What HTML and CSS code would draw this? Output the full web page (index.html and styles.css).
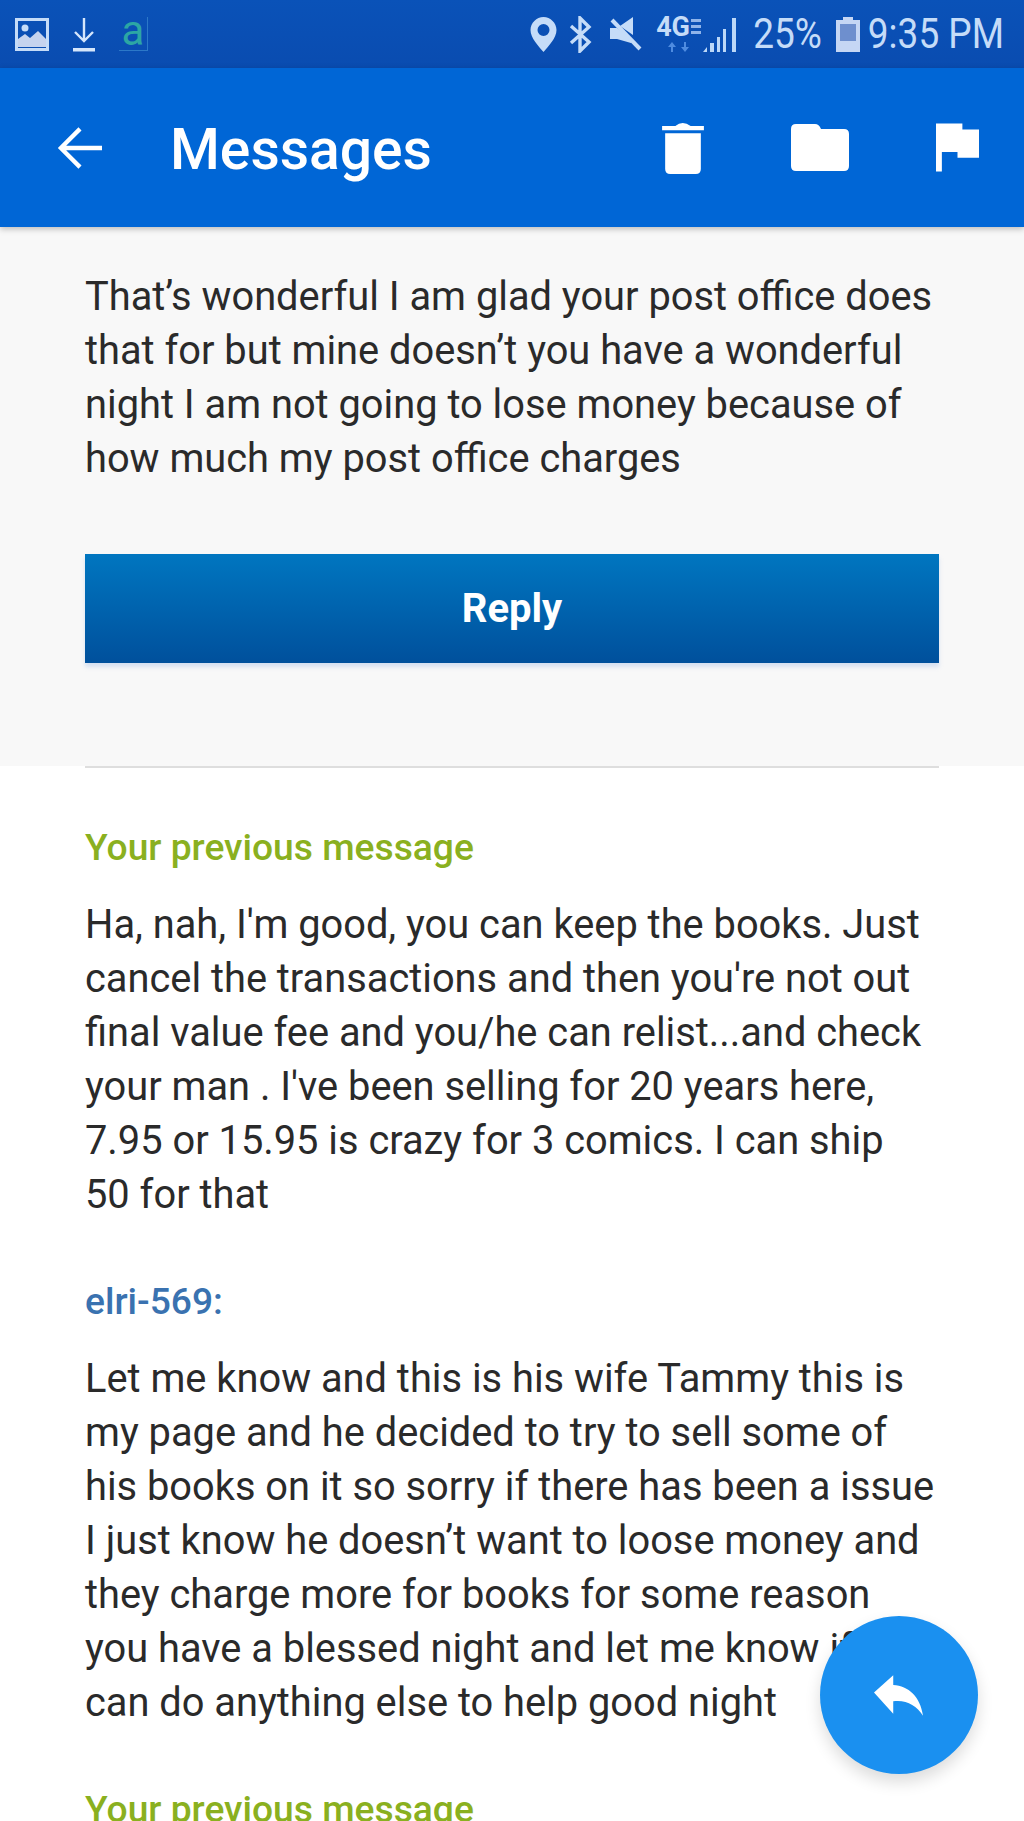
FILE: index.html
```html
<!DOCTYPE html>
<html lang="en">
<head>
  <meta charset="UTF-8">
  <meta name="viewport" content="width=device-width, initial-scale=1.0">
  <link rel="stylesheet" href="styles.css">
  <title>Messages</title>
</head>
<body>
  <div class="status-bar">
    <div class="status-left">
      <svg class="ic-image" width="34" height="33" viewBox="0 0 34 33">
        <rect x="1.5" y="1.5" width="31" height="30" fill="none" stroke="#c5dcf8" stroke-width="3"/>
        <circle cx="10" cy="10" r="3.5" fill="#c5dcf8"/>
        <path d="M3 29V21L10 16L15 20L23 13L31 21V29Z" fill="#c5d3ee"/>
      </svg>
      <svg class="ic-download" width="24" height="35" viewBox="0 0 24 35">
        <path d="M12 1V24M3 15L12 24L21 15" fill="none" stroke="#d5e6fb" stroke-width="2.4"/>
        <rect x="1" y="31" width="22" height="3.5" fill="#d5e6fb"/>
      </svg>
      <span class="amazon-a">a</span>
    </div>
    <div class="status-right">
      <svg class="ic-pin" width="27" height="35" viewBox="0 0 26 35">
        <path fill-rule="evenodd" d="M13 0C6 0 0 6 0 13C0 21 8 29 13 35C18 29 26 21 26 13C26 6 20 0 13 0ZM13 7A6 6 0 1 1 13 19A6 6 0 1 1 13 7Z" fill="#c5dcf8"/>
      </svg>
      <svg class="ic-bt" width="24" height="37" viewBox="0 0 24 37">
        <path d="M3 10L21 26L12 35V2L21 11L3 27" fill="none" stroke="#c5dcf8" stroke-width="3.4"/>
      </svg>
      <svg class="ic-mute" width="33" height="34" viewBox="0 0 33 34">
        <path d="M1 11H8L12 14L22 24V26L8 22H1ZM11 9L24 0V18Z" fill="#c5dcf8"/>
        <path d="M3 3L31 32" stroke="#c5dcf8" stroke-width="4"/>
      </svg>
      <div class="net">
        <span class="net-label">4G</span>
        <span class="net-bars"></span>
        <svg width="26" height="10" viewBox="0 0 26 10">
          <path d="M6 0L10 5H7V10H5V5H2ZM19 10L15 5H18V0H20V5H23Z" fill="#4f8ce0"/>
        </svg>
      </div>
      <svg class="ic-signal" width="34" height="35" viewBox="0 0 34 35">
        <path d="M0 35L4 30V35ZM7 26H11V35H7ZM14 20H17V35H14ZM20 12H23V35H20ZM29 1H33V35H29Z" fill="#bcd8f8"/>
      </svg>
      <span class="status-text">25%</span>
      <svg class="ic-battery" width="24" height="35" viewBox="0 0 24 35">
        <path fill-rule="evenodd" d="M7 0H17V3H24V35H0V3H7Z" fill="#c5d6f4"/>
        <rect x="4" y="7" width="16" height="17" fill="#6e8fce"/>
      </svg>
      <span class="status-text">9:35 PM</span>
    </div>
  </div>

  <header class="app-bar">
    <svg class="back" width="46" height="44" viewBox="0 0 48 46">
      <path d="M24 3L4 23L24 43M4 23H47" fill="none" stroke="#fff" stroke-width="4.5"/>
    </svg>
    <h1 class="title">Messages</h1>
    <div class="actions">
      <svg width="42" height="53" viewBox="0 0 41 52">
        <path d="M0 5H13Q20 -1 28 5H41V9H0ZM3 12H38V47Q38 52 33 52H8Q3 52 3 47Z" fill="#fff"/>
      </svg>
      <svg width="58" height="47" viewBox="0 0 58 47">
        <path d="M5 0H24Q28 0 30 5H53Q58 5 58 10V42Q58 47 53 47H5Q0 47 0 42V5Q0 0 5 0Z" fill="#fff"/>
      </svg>
      <svg width="43" height="49" viewBox="0 0 44 49">
        <path d="M0 0H27V6H44V35H22V29H6V49H0Z" fill="#fff"/>
      </svg>
    </div>
  </header>

  <section class="latest">
    <p class="msg">That’s wonderful I am glad your post office does that for but mine doesn’t you have a wonderful night I am not going to lose money because of how much my post office charges</p>
    <a class="reply-btn">Reply</a>
  </section>

  <main class="history">
    <h2 class="from from-you">Your previous message</h2>
    <p class="msg">Ha, nah, I'm good, you can keep the books. Just cancel the transactions and then you're not out final value fee and you/he can relist...and check your man . I've been selling for 20 years here, 7.95 or 15.95 is crazy for 3 comics. I can ship 50 for that</p>
    <h2 class="from from-other">elri-569:</h2>
    <p class="msg">Let me know and this is his wife Tammy this is my page and he decided to try to sell some of his books on it so sorry if there has been a issue I just know he doesn’t want to loose money and they charge more for books for some reason you have a blessed night and let me know if I can do anything else to help good night</p>
    <h2 class="from from-you">Your previous message</h2>
  </main>

  <button class="fab">
    <svg width="50" height="41" viewBox="0 0 52 42">
      <path d="M20 0L0 18L20 40V27C33 25 44 31 51 42C48 22 36 11 20 10Z" fill="#fff"/>
    </svg>
  </button>
</body>
</html>
```

FILE: styles.css
```css
html, body {
  height: 1821px;
}

body {
  margin: 0;
  overflow: hidden;
  background-color: #fff;
  font-family: Roboto, sans-serif;
  color: #2a2a2a;
}

svg {
  display: block;
}

.status-bar {
  height: 68px;
  padding: 0 20px 0 15px;
  box-sizing: border-box;
  display: flex;
  justify-content: space-between;
  align-items: center;
  background: linear-gradient(#0a52b8, #0a4cb0);
}

.status-left,
.status-right {
  display: flex;
  align-items: center;
}

.status-left {
  gap: 23px;
}

.amazon-a {
  width: 28px;
  height: 33px;
  border-right: 1px solid #2c78c8;
  border-bottom: 1px solid #2c78c8;
  color: #2ca6a4;
  font-size: 42px;
  line-height: 27px;
  text-align: center;
}

.status-right {
  gap: 14px;
}

.ic-pin {
  margin-right: -3px;
}

.ic-mute {
  margin-left: 3px;
}

.ic-signal {
  margin-left: -12px;
  margin-right: 2px;
}

.ic-battery {
  margin-right: -6px;
}

.status-text {
  color: #c5dcf8;
  font-size: 37px;
  line-height: 40px;
  transform: scaleY(1.15);
}

.net {
  position: relative;
  width: 45px;
  height: 36px;
}

.net-label {
  display: block;
  color: #c5dcf8;
  font-size: 27px;
  font-weight: 700;
  line-height: 22px;
}

.net-bars {
  position: absolute;
  right: 0;
  top: 3px;
  width: 10px;
  height: 15px;
  background: repeating-linear-gradient(#8fb4ea 0 3px, transparent 3px 6px);
}

.net svg {
  margin-left: 10px;
  margin-top: 4px;
}

.app-bar {
  height: 159px;
  padding: 0 45px 0 57px;
  box-sizing: border-box;
  display: flex;
  align-items: center;
  background-color: #0066d6;
  box-shadow: 0 2px 6px rgba(0, 0, 0, 0.25);
  position: relative;
}

.back {
  margin-right: 67px;
}

.title {
  margin: 4px 0 0;
  color: #fff;
  font-size: 57px;
  font-weight: 500;
}

.actions {
  margin-left: auto;
  display: flex;
  align-items: center;
  gap: 87px;
}

.latest {
  height: 539px;
  padding: 43px 85px 0;
  box-sizing: border-box;
  background-color: #f8f8f8;
}

.msg {
  margin: 0;
  padding-right: 4px;
  font-size: 39.8px;
  line-height: 54px;
}

.reply-btn {
  display: block;
  height: 109px;
  margin-top: 68px;
  background: linear-gradient(#0076c0, #00509c);
  box-shadow: 0 4px 4px rgba(150, 180, 230, 0.35);
  color: #fff;
  font-size: 40px;
  font-weight: 700;
  line-height: 109px;
  text-align: center;
}

.history {
  margin: 0 85px;
  border-top: 2px solid #dedede;
}

.from {
  margin: 0;
  font-size: 37.2px;
  font-weight: 500;
  line-height: 44px;
}

.from-you {
  color: #8ab020;
}

.from-other {
  color: #3a72b0;
}

.history .from {
  padding-top: 57px;
  padding-bottom: 29px;
}

.fab {
  position: fixed;
  left: 820px;
  top: 1616px;
  width: 158px;
  height: 158px;
  padding: 0;
  border: none;
  border-radius: 50%;
  display: flex;
  align-items: center;
  justify-content: center;
  background-color: #1a90f0;
  box-shadow: 0 8px 16px rgba(0, 0, 0, 0.14);
}
```
